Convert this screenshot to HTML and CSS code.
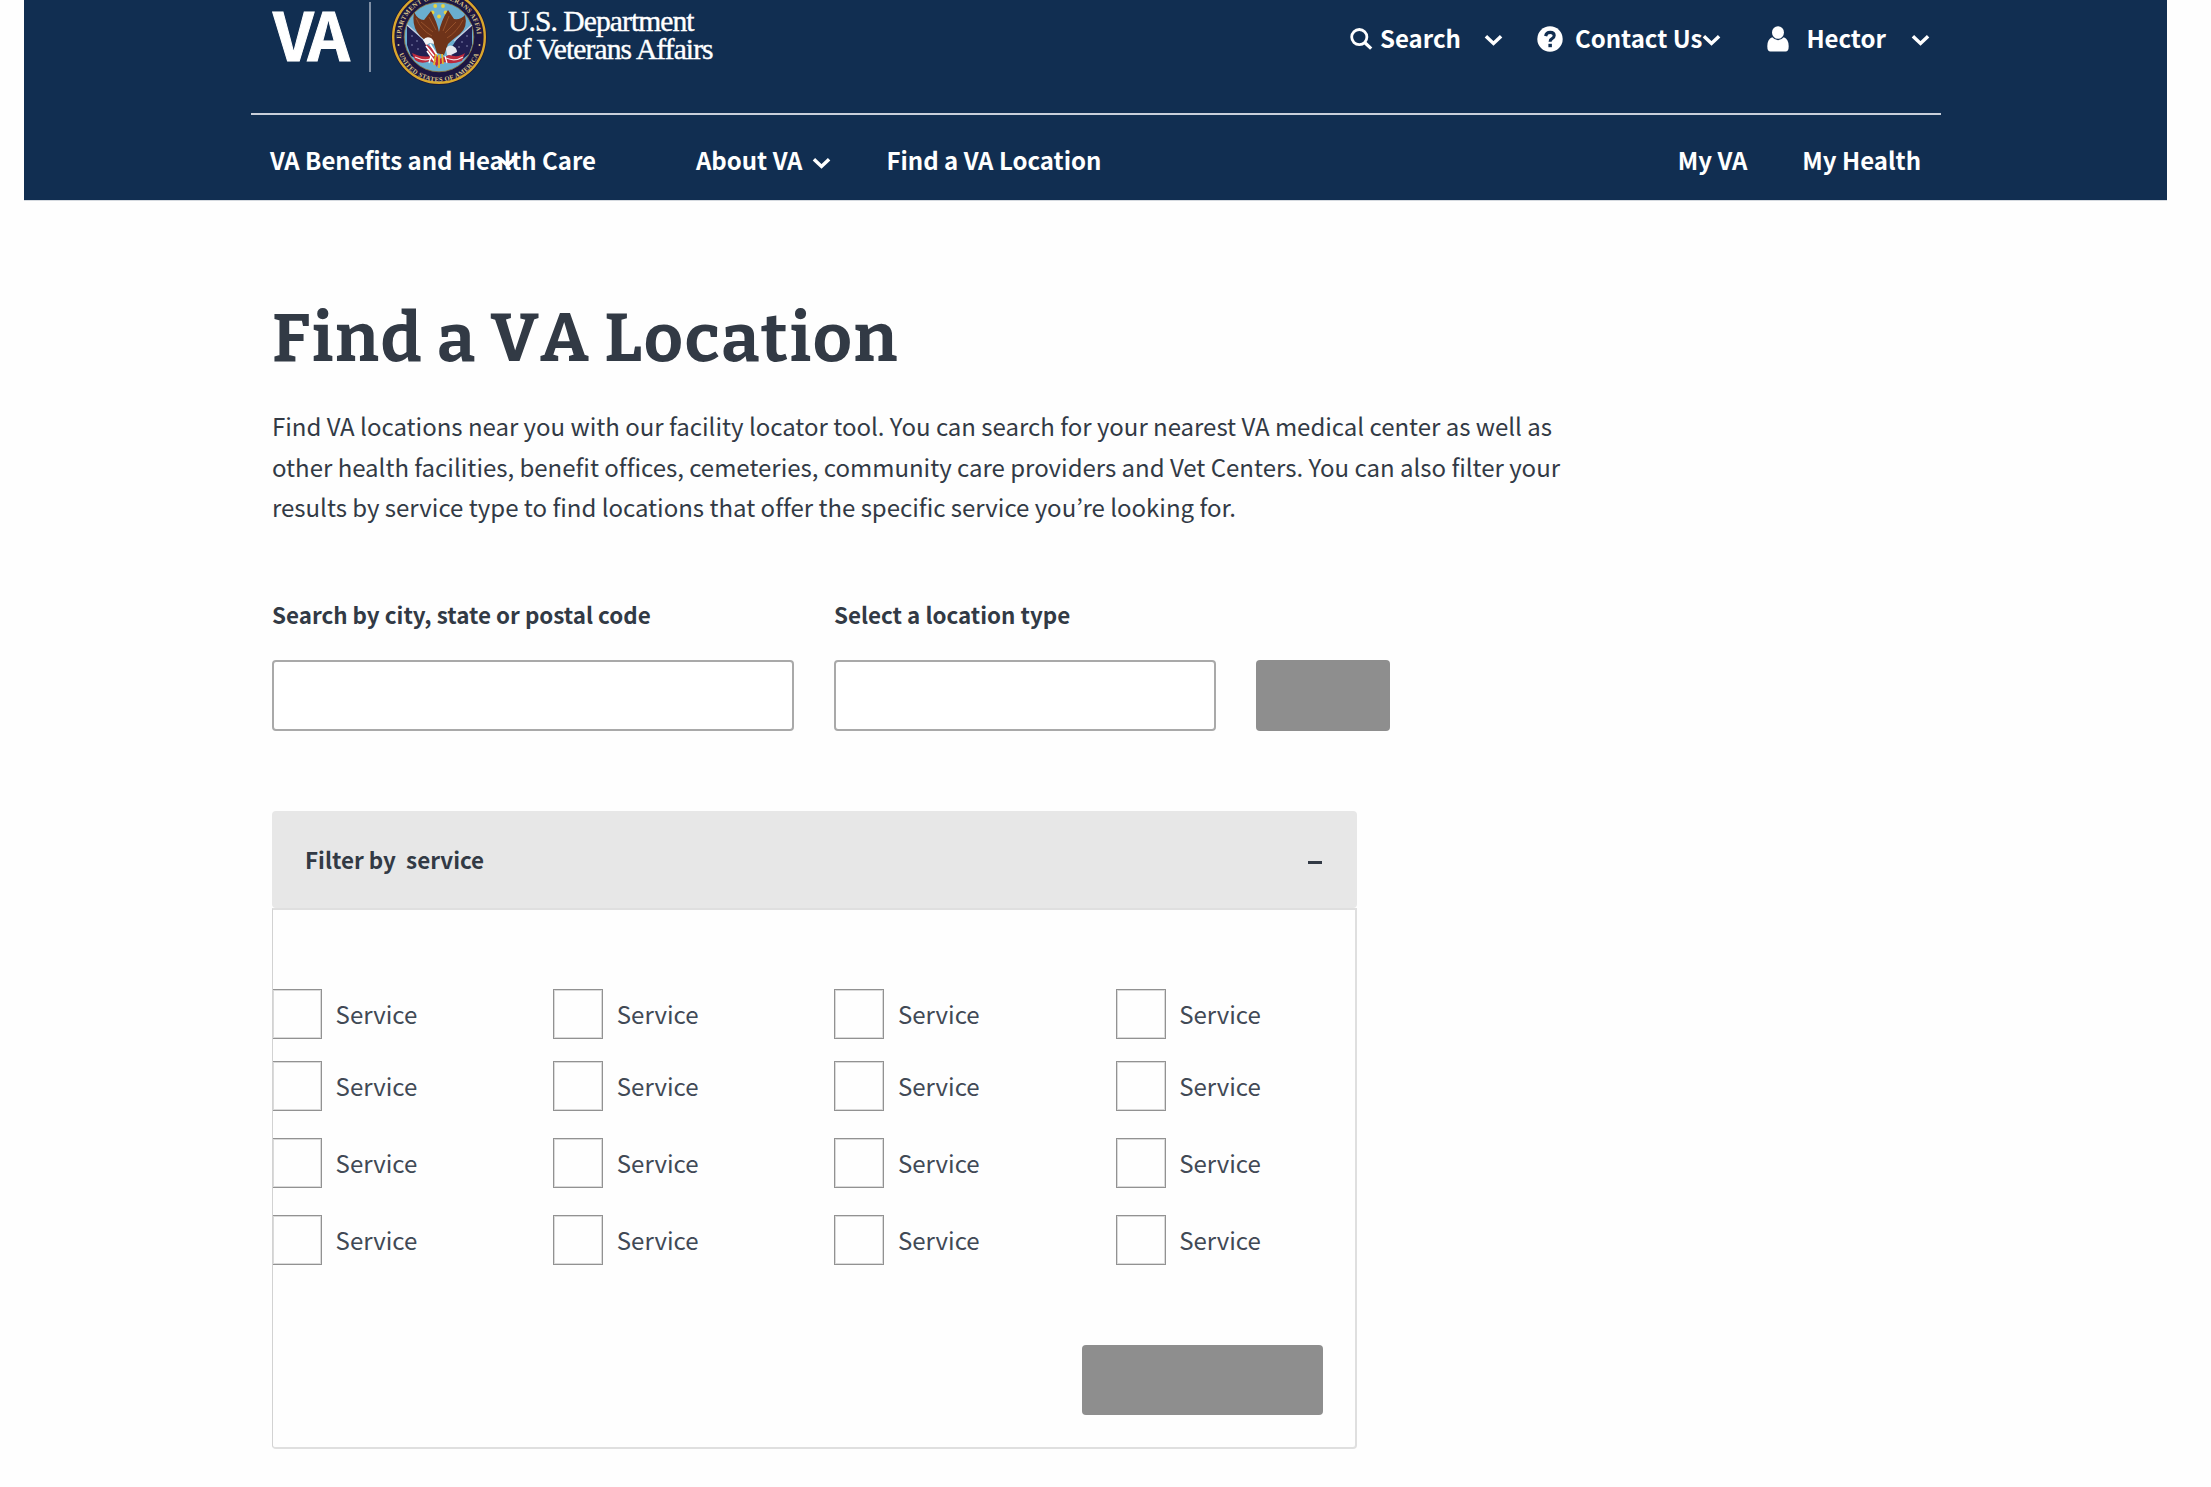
FILE: index.html
```html
<!DOCTYPE html>
<html lang="en">
<head>
<meta charset="utf-8">
<title>Find a VA Location</title>
<link rel="stylesheet" href="styles.css">
</head>
<body>
<svg class="defs" aria-hidden="true">
  <symbol id="chevron" viewBox="0 0 19 12"><path d="M1.9 2.2 9.5 9.4 17.1 2.2" fill="none" stroke="#fff" stroke-width="3.5"/></symbol>
</svg>

<header class="header">
  <div class="header-top">
    <a class="brand">
      <span class="brand-va">VA</span>
      <span class="brand-rule"></span>
      <svg class="seal" viewBox="-48 -48 96 96">
        <defs>
          <path id="ring-top" d="M-38 0A38 38 0 0 1 38 0"/>
          <path id="ring-bottom" d="M-42.6 2A42.6 42.6 0 0 0 42.6 2"/>
        </defs>
        <circle r="47.8" fill="#1b1539"/>
        <circle r="45.8" fill="#1d1742" stroke="#d9a72c" stroke-width="2.4"/>
        <circle r="34.8" fill="#6aaed0" stroke="#8d7433" stroke-width="0.8"/>
        <text class="seal-text"><textPath href="#ring-top" startOffset="50%" text-anchor="middle">DEPARTMENT OF VETERANS AFFAIRS</textPath></text>
        <text class="seal-text"><textPath href="#ring-bottom" startOffset="50%" text-anchor="middle">UNITED STATES OF AMERICA</textPath></text>
        <g fill="#d9c48a"><circle cx="-40.5" cy="8" r="1"/><circle cx="40.5" cy="8" r="1"/></g>
        <g fill="#e8d33f"><circle cx="-3.8" cy="-31" r="1.9"/><circle cx="4" cy="-31" r="1.9"/><circle cx="-6.5" cy="-24.5" r="1.9"/><circle cx="6.6" cy="-24.5" r="1.9"/><circle cx="0" cy="-20.5" r="1.9"/></g>
        <path d="M-32-12-16 3-5 17-9 22-20 23-28 19-32 8Z" fill="#211f52"/>
        <path d="M33-12 18 2 10 14 15 22 24 22 30 17 33 8Z" fill="#211f52"/>
        <path d="M-32-12-12 5M33-12 15 4" stroke="#c9cede" stroke-width="1.3"/>
        <g fill="#8f93b8"><circle cx="-27" cy="-1" r=".8"/><circle cx="-22" cy="4" r=".8"/><circle cx="-27" cy="8" r=".8"/><circle cx="-21" cy="12" r=".8"/><circle cx="28" cy="-1" r=".8"/><circle cx="23" cy="5" r=".8"/><circle cx="28" cy="9" r=".8"/><circle cx="20" cy="10" r=".8"/></g>
        <path d="M-27 16Q-17 21-8 19L0 22 10 18Q20 21 26 16L23 24Q12 28 6 25L-1 28-9 24Q-18 28-24 23Z" fill="#bd2b3d"/>
        <path d="M-24 20Q-14 25-6 21M7 21Q16 25 24 20" fill="none" stroke="#f0dfe2" stroke-width="1.2"/>
        <path d="M-14 6-6 12 0 22-2 30-9 20Z" fill="#c32d3e"/>
        <path d="M-13 9-5 19M-9 7-2 18M-12 14-4 25" stroke="#fff" stroke-width="1.6"/>
        <path d="M-25-25Q-21-17-15-17L-8-26Q-2-15 0-5Q2-16 9-27L15-18Q22-17 26-22Q29-10 21-3Q13 3 9 7L5 18-2 16-5 7Q-17 3-22-5Q-27-13-25-25Z" fill="#6f3319"/>
        <path d="M-23-19Q-18-7-7-1M-18-15-6-5M-10-20-3-7M24-17Q18-5 8 1M17-15 6-4M10-21 4-6" fill="none" stroke="#96512b" stroke-width="1"/>
        <path d="M-16 3Q-13-1-8 1Q-5 3-5 7L-9 6-13 8Z" fill="#f3f4f5"/>
        <path d="M7 12Q9 7 14 9Q18 11 18 15L12 18 8 18Z" fill="#e5e8ee"/>
        <path d="M-3 17-5 28M0 18 0 31M3 17 4 27" stroke="#e5b62c" stroke-width="1.8"/>
        <path d="M-8 19-10 26M6 19 8 26" stroke="#fff" stroke-width="1.2"/>
      </svg>
      <span class="brand-name">U.S. Department<br>of Veterans Affairs</span>
    </a>
    <div class="tools">
      <svg class="icon-search" viewBox="0 0 23 22"><circle cx="9.3" cy="9.1" r="7.6" fill="none" stroke="#fff" stroke-width="2.8"/><path d="M14.7 14.5 21.2 20.7" stroke="#fff" stroke-width="3.2"/></svg>
      <span class="tool tool-search">Search</span>
      <svg class="chevron chevron-search"><use href="#chevron"/></svg>
      <svg class="icon-help" viewBox="0 0 26 26"><circle cx="13" cy="13" r="12.7" fill="#fff"/><path d="M8.6 10.1Q9.3 6.4 13.2 6.4Q17.2 6.4 17.2 9.6Q17.2 11.5 15.1 12.6Q13.1 13.6 13.1 15.8" fill="none" stroke="#112e51" stroke-width="3.1"/><rect x="11.4" y="17.8" width="3.5" height="3.4" fill="#112e51"/></svg>
      <span class="tool tool-contact">Contact Us</span>
      <svg class="chevron"><use href="#chevron"/></svg>
      <svg class="icon-user" viewBox="0 0 22 26"><ellipse cx="11" cy="6.5" rx="6" ry="6.3" fill="#fff"/><path d="M5.2 11.3Q8 14.2 11 14.2T16.8 11.3Q21.7 13.2 21.7 20.3Q21.7 25.6 18.6 25.6H3.4Q.3 25.6.3 20.3Q.3 13.2 5.2 11.3Z" fill="#fff"/></svg>
      <span class="tool tool-user">Hector</span>
      <svg class="chevron chevron-user"><use href="#chevron"/></svg>
    </div>
  </div>
  <nav class="nav">
    <a class="nav-benefits">VA Benefits and Health Care<svg class="chevron nav-overlay"><use href="#chevron"/></svg></a>
    <a class="nav-about">About VA<svg class="chevron"><use href="#chevron"/></svg></a>
    <a class="nav-find">Find a VA Location</a>
    <a class="nav-my">My VA</a>
    <a class="nav-health">My Health</a>
  </nav>
</header>

<main class="main">
  <h1>Find a VA Location</h1>
  <p class="intro">Find VA locations near you with our facility locator tool. You can search for your nearest VA medical center as well as<br>other health facilities, benefit offices, cemeteries, community care providers and Vet Centers. You can also filter your<br>results by service type to find locations that offer the specific service you’re looking for.</p>

  <form class="search">
    <label class="field field-place">Search by city, state or postal code<input type="text"></label>
    <label class="field field-type">Select a location type<input type="text"></label>
    <button type="button" class="btn btn-search" aria-label="Search"></button>
  </form>

  <section class="filter">
    <div class="filter-head"><span class="filter-title">Filter by  service</span><span class="minus"></span></div>
    <div class="filter-body">
      <div class="services">
        <label class="service"><i class="box"></i>Service</label><label class="service"><i class="box"></i>Service</label><label class="service"><i class="box"></i>Service</label><label class="service"><i class="box"></i>Service</label>
        <label class="service"><i class="box"></i>Service</label><label class="service"><i class="box"></i>Service</label><label class="service"><i class="box"></i>Service</label><label class="service"><i class="box"></i>Service</label>
        <label class="service"><i class="box"></i>Service</label><label class="service"><i class="box"></i>Service</label><label class="service"><i class="box"></i>Service</label><label class="service"><i class="box"></i>Service</label>
        <label class="service"><i class="box"></i>Service</label><label class="service"><i class="box"></i>Service</label><label class="service"><i class="box"></i>Service</label><label class="service"><i class="box"></i>Service</label>
      </div>
      <button type="button" class="btn btn-apply" aria-label="Apply"></button>
    </div>
  </section>
</main>
</body>
</html>
```

FILE: styles.css
```css
* { box-sizing: border-box; }

body {
  margin: 0;
  background: #fefefe;
  color: #323a45;
  font: 24px/40px "Source Sans Pro", "Noto Sans CJK KR", "Open Sans", sans-serif;
  overflow: hidden;
}

.defs { display: none; }

/* Header */
.header {
  width: 2143px;
  height: 201px;
  margin-left: 24px;
  padding: 0 226px 0 227px;
  background: #112e51;
  border-bottom: 1px solid #d5dae0;
  color: #fff;
  font-weight: bold;
  white-space: nowrap;
}

.header-top {
  display: flex;
  align-items: flex-start;
  justify-content: space-between;
  height: 115px;
  padding: 0 11px 0 21px;
  border-bottom: 2px solid #c9cfda;
}

.brand, .tools { display: flex; align-items: center; height: 74px; }

.brand-va {
  width: 96px;
  margin: -11px 0 0 1px;
  font-size: 66px;
  line-height: 74px;
  letter-spacing: -5px;
  -webkit-text-stroke: 1px #fff;
}

.brand-rule { width: 2px; height: 70px; background: #7f8fa5; }

.seal { flex: none; width: 96px; height: 96px; margin-left: 20px; }

.seal-text { font: bold 6.6px "Liberation Serif", serif; fill: #d9c48a; letter-spacing: .3px; }

.brand-name {
  margin: -2px 0 0 21px;
  font: 29.5px/27.6px "Liberation Serif", serif;
  letter-spacing: -.9px;
  -webkit-text-stroke: .4px #fff;
}

.tools svg { flex: none; }

.tool { margin-top: 2px; }
.chevron { width: 19px; height: 12px; margin-top: 6px; }
.icon-search { width: 23px; height: 22px; margin-top: 3px; }
.tool-search { margin-left: 7px; }
.chevron-search { margin-left: 23px; }
.icon-help { width: 26px; height: 26px; margin: 3px 0 0 34px; }
.tool-contact { margin-left: 12px; }
.icon-user { width: 22px; height: 26px; margin: 3px 0 0 46px; }
.tool-user { margin-left: 17px; }
.chevron-user { margin-left: 25px; }

.nav { display: flex; align-items: center; height: 85px; padding: 5px 20px 0 19px; }
.nav-benefits { position: relative; letter-spacing: -.04px; }
.nav-overlay { position: absolute; left: 228px; top: 10px; }
.nav-about { display: flex; align-items: center; gap: 10px; margin-left: 100px; }
.nav-find { margin-left: 55px; }
.nav-my { margin-left: auto; }
.nav-health { margin-left: 55px; }

/* Page content */
.main { padding: 97px 0 0 272px; }

h1 {
  margin: 0;
  font: bold 68px/80px Bitter, "DejaVu Serif Condensed", serif;
  font-kerning: none;
  letter-spacing: 1.6px;
}

.intro { margin: 28.4px 0 0; line-height: 40.3px; letter-spacing: -.01px; white-space: nowrap; }

.search { display: flex; align-items: flex-end; gap: 40px; margin-top: 71px; }

.field { display: flex; flex-direction: column; gap: 30px; font-size: 22.4px; line-height: 32px; font-weight: bold; }
.field-place { width: 522px; }
.field-type { width: 382px; }

.field input { width: 100%; height: 71px; border: 2px solid #a9a9a9; border-radius: 4px; background: #fff; }

.btn { border: 0; border-radius: 4px; background: #8e8e8e; }
.btn-search { width: 134px; height: 71px; }

/* Service filter */
.filter { width: 1085px; margin-top: 80px; }

.filter-head {
  display: flex;
  align-items: center;
  justify-content: space-between;
  height: 97px;
  padding: 0 35px 2px 33px;
  border-radius: 4px;
  background: #e7e7e7;
  font-size: 22.4px;
  font-weight: bold;
}

.filter-title { white-space: pre; }

.minus { width: 14px; height: 3px; margin-top: 7px; background: #323a45; }

.filter-body {
  display: flex;
  flex-direction: column;
  height: 541px;
  padding: 78px 32px 0 0;
  border: 2px solid #dfdfdf;
  border-left: 1px solid #d2d2d2;
  border-radius: 0 0 4px 4px;
  overflow: hidden;
}

.services {
  display: grid;
  grid-template: 72px 77px 77px 50px / repeat(4, 281.2px);
  margin-left: -1px;
}

.service { display: flex; align-items: center; gap: 13.6px; height: 50px; padding-top: 1px; color: #414955; }
.box { width: 50px; height: 50px; border: 1px solid #929292; box-shadow: inset 0 0 0 1px #dadada; }

.btn-apply { align-self: flex-end; width: 241px; height: 70px; margin-top: 81px; }
```
